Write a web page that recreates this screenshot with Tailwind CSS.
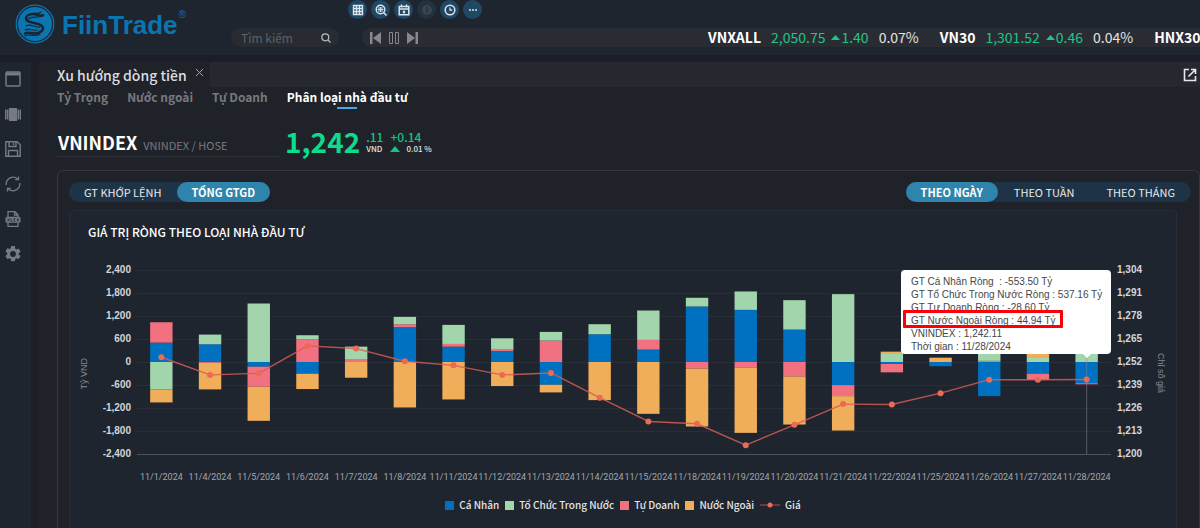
<!DOCTYPE html>
<html lang="vi">
<head>
<meta charset="utf-8">
<meta name="viewport" content="width=device-width, initial-scale=1">
<title>FiinTrade</title>
<script src="https://cdn.jsdelivr.net/npm/@tailwindcss/browser@4"></script>
</head>
<body class="h-screen overflow-hidden flex flex-col bg-[#1b1e27] text-white font-['Noto_Sans_CJK_SC','Noto_Sans',sans-serif]">

<header class="flex shrink-0 h-[55px] bg-[#1e252f]">
  <a href="#" class="flex shrink-0 w-[231px] pl-[15px] pt-1 text-[#0b75b0]" aria-label="FiinTrade">
    <svg class="size-10 shrink-0" viewBox="0 0 40 40" fill="none" stroke="currentColor">
      <circle cx="20" cy="20" r="18.8" stroke-width="1.2"/>
      <circle cx="20" cy="20" r="17" fill="currentColor" stroke="none"/>
      <g stroke="#1b2430" stroke-linecap="round" stroke-linejoin="round">
        <path stroke-width="2.4" d="M28 11c-3 2-6-1-10-1-4 0-7 2-7 4.500 0 3 4 3.500 8 4.500 6 1 9 2.500 9 5.500 0 3-5 5-9 5-4 0-6-2-9 0"/>
        <path stroke-width="1.100" d="M26 8c-3 3-7 0-10 2M13 15c4-3 8-1 15-3M15 18c4 2 11 1 14 6M11 22c4-3 9 2 14 1M10 26c4-2 8 1 12 0M10 32c4-3 9 2 15-2"/>
      </g>
    </svg>
    <span class="ml-[7px] mt-1 text-[26px] leading-[34px] font-bold font-['Liberation_Sans',Arial,sans-serif]">FiinTrade</span>
    <span class="ml-px mt-[6px] text-[10px] leading-[10px] font-['Liberation_Sans',Arial,sans-serif]">®</span>
  </a>
  <div class="flex-1 min-w-0 flex flex-col">
    <nav class="flex gap-1 h-5 pl-[117px] text-[#dce6ee]" aria-label="Công cụ">
      <button class="size-[19px] rounded-full bg-[#1f4865] grid place-items-center" aria-label="Bảng giá"><svg class="size-3" viewBox="0 0 12 12" fill="none" stroke="currentColor" stroke-width="1.400"><path d="M1.500 1.500h9v9h-9zM1.500 4.500h9M1.500 7.500h9M4.500 1.500v9M7.500 1.500v9"/></svg></button>
      <button class="size-[19px] rounded-full bg-[#1f4865] grid place-items-center" aria-label="Tra cứu"><svg class="size-3" viewBox="0 0 12 12" fill="none" stroke="currentColor" stroke-width="1.400"><circle cx="5.500" cy="5.500" r="4.300"/><path d="M8.500 8.500l3 3"/><path stroke-width=".9" d="M3 4h5M2.500 5.500h6M3 7h5M5.500 3v5"/></svg></button>
      <button class="size-[19px] rounded-full bg-[#1f4865] grid place-items-center" aria-label="Lịch"><svg class="size-3" viewBox="0 0 12 12" fill="none" stroke="currentColor" stroke-width="1.500"><path d="M1.200 2.500h9.600v8.300H1.200zM1 5h10M3.500.5v3M8.500.5v3M6 6.500v3M4.800 8h2.400"/></svg></button>
      <button class="size-[19px] rounded-full bg-[#213241] grid place-items-center text-[#3c444e]" aria-label="Thông tin"><svg class="size-3" viewBox="0 0 12 12"><circle cx="6" cy="6" r="5" fill="currentColor"/><path d="M6 3v6" stroke="#213241" stroke-width="1.500"/></svg></button>
      <button class="size-[19px] rounded-full bg-[#1f4865] grid place-items-center" aria-label="Lịch sử"><svg class="size-3" viewBox="0 0 12 12" fill="none" stroke="currentColor" stroke-width="1.500"><circle cx="6" cy="6" r="4.800"/><path stroke-width="1.200" d="M6 3.500v2.700h2.300"/></svg></button>
      <button class="size-[19px] rounded-full bg-[#1f4865] grid place-items-center" aria-label="Thêm"><svg class="size-3" viewBox="0 0 12 12" fill="currentColor"><circle cx="3" cy="6" r="1"/><circle cx="6" cy="6" r="1"/><circle cx="9" cy="6" r="1"/></svg></button>
    </nav>
    <div class="flex mt-2 h-[19px] gap-[23px]">
      <label class="flex items-center shrink-0 w-[108px] rounded-full bg-[#282b32] pl-[10px] pr-2">
        <input type="text" aria-label="Tìm kiếm" placeholder="Tìm kiếm" class="w-0 flex-1 bg-transparent text-[12px] leading-[19px] placeholder:text-[#5c6066] outline-none">
        <svg class="size-[10px] text-[#b9bdc2]" viewBox="0 0 10 10" fill="none" stroke="currentColor" stroke-width="1.200"><circle cx="4.300" cy="4.300" r="3.500"/><path d="M7 7l2.500 2.500"/></svg>
      </label>
      <div class="flex-1 min-w-0 flex items-center rounded-l-full bg-[#2a2c33] pl-2 overflow-hidden">
        <div class="flex items-center gap-[6px] w-[338px] shrink-0 text-[#85888d]">
          <button aria-label="Trước"><svg class="w-3 h-3 block" viewBox="0 0 12 12" fill="currentColor"><path d="M0 0h2.500v12H0zM11 0v12L3 6z"/></svg></button>
          <button aria-label="Tạm dừng"><svg class="w-3 h-3 block" viewBox="0 0 12 12" fill="none" stroke="currentColor"><path d="M1.500.5h3v11h-3zM7.500.5h3v11h-3z"/></svg></button>
          <button aria-label="Sau"><svg class="w-3 h-3 block" viewBox="0 0 12 12" fill="currentColor"><path d="M9.500 0H12v12H9.500zM1 0v12l8-6z"/></svg></button>
        </div>
        <div class="flex items-center gap-[21px] text-[14px] leading-[19px] whitespace-nowrap text-[#e3e4e6]">
          <div class="flex items-center gap-[10px] shrink-0"><b class="text-white">VNXALL</b><span class="text-[#1fc588]">2,050.75</span><span class="flex items-center gap-px -ml-1 text-[#1fc588]"><svg class="w-[9px] h-[5px]" viewBox="0 0 9 5" fill="currentColor"><path d="M0 5L4.500 0 9 5z"/></svg>1.40</span><span>0.07%</span></div>
          <div class="flex items-center gap-[10px] shrink-0"><b class="text-white">VN30</b><span class="text-[#1fc588]">1,301.52</span><span class="flex items-center gap-px -ml-1 text-[#1fc588]"><svg class="w-[9px] h-[5px]" viewBox="0 0 9 5" fill="currentColor"><path d="M0 5L4.500 0 9 5z"/></svg>0.46</span><span>0.04%</span></div>
          <b class="text-white shrink-0">HNX30</b>
        </div>
      </div>
    </div>
  </div>
</header>

<div class="flex-1 min-h-0 flex pt-[7px] gap-[7px]">
  <aside class="shrink-0 w-[31px] bg-[#1e252f] flex flex-col gap-[19px] pl-[5px] pt-[9px] text-[#777b81]">
    <button aria-label="Cửa sổ"><svg class="size-4 block" viewBox="0 0 16 16" fill="none" stroke="currentColor" stroke-width="1.500"><rect x="1" y="1" width="14" height="14" rx="1"/><path d="M1 3h14" stroke-width="3"/></svg></button>
    <button aria-label="Bố cục"><svg class="size-4 block" viewBox="0 0 16 16" fill="currentColor"><path d="M4 2h8v13H4zM0 3.500h1.300v10H0zM1.800 3.500h1.700v10H1.800zM12.500 3.500h1.700v10h-1.700zM14.700 3.500H16v10h-1.300z"/></svg></button>
    <button aria-label="Lưu"><svg class="size-4 block" viewBox="0 0 16 16" fill="none" stroke="currentColor" stroke-width="1.400"><path d="M.8.8h11.400l3 3v11.400H.8zM4 1v4.500h7V1M3.500 15v-5.500h9V15M8.500 2v2"/></svg></button>
    <button aria-label="Làm mới"><svg class="size-4 block" viewBox="0 0 16 16" fill="none" stroke="currentColor" stroke-width="1.300"><path d="M1.200 9A7 7 0 0 1 12.500 2.800M14.800 7A7 7 0 0 1 3.500 13.200M13.500.5v3.200h-3.200M2.500 15.500v-3.200h3.200"/></svg></button>
    <button aria-label="Xuất Excel"><svg class="size-4 block" viewBox="0 0 16 16" fill="none" stroke="currentColor" stroke-width="1.300"><path d="M3 6V.7h7l3 3V6M3 11.500v3.800h10v-3.800M9.500.7V4H13"/><rect x=".5" y="5.800" width="15" height="6" rx="1.500" fill="currentColor" stroke="none"/><path stroke="#1e252f" stroke-width=".8" d="M2.500 7.300l2 3M4.500 7.300l-2 3M6 7.300v3h1.500M10.500 7.500H9v2.700h1.500M11.800 7.300l2 3M13.800 7.300l-2 3"/></svg></button>
    <button aria-label="Cài đặt"><svg class="size-4 block" viewBox="2 2 20 20" fill="currentColor"><path d="M19.140 12.940c.04-.3.060-.61.060-.94s-.02-.64-.07-.94l2.030-1.580a.49.490 0 0 0 .12-.61l-1.920-3.320a.488.488 0 0 0-.59-.22l-2.390.96c-.5-.38-1.030-.7-1.620-.94l-.36-2.540A.484.484 0 0 0 13.920 2h-3.840c-.24 0-.43.170-.47.410l-.36 2.540c-.59.240-1.130.57-1.620.94l-2.390-.96a.48.480 0 0 0-.59.220L2.740 8.470a.47.470 0 0 0 .12.610l2.030 1.580c-.05.300-.09.630-.09.940s.02.640.07.940l-2.030 1.580a.49.490 0 0 0-.12.610l1.920 3.320c.12.220.37.290.59.220l2.390-.96c.5.380 1.030.7 1.620.94l.36 2.540c.05.240.24.410.48.410h3.840c.24 0 .44-.17.470-.41l.36-2.540c.59-.24 1.130-.56 1.620-.94l2.390.96c.22.080.47 0 .59-.22l1.920-3.320a.47.470 0 0 0-.12-.61zM12 15.600a3.600 3.600 0 1 1 0-7.200 3.600 3.600 0 0 1 0 7.200z"/></svg></button>
  </aside>

  <main class="flex-1 min-w-0 flex flex-col bg-[#202229]">
    <div class="flex shrink-0 h-[25px]">
      <div class="flex shrink-0 w-[172px] pl-[19px] gap-2 text-[#dcdde0]">
        <h1 class="text-[14px] leading-[26px] font-medium whitespace-nowrap">Xu hướng dòng tiền</h1>
        <button class="text-[#a0a3a8] pb-1" aria-label="Đóng"><svg class="size-[9px]" viewBox="0 0 9 9" stroke="currentColor"><path d="M1 1l7 7M8 1l-7 7"/></svg></button>
      </div>
      <div class="flex-1 bg-[#262830] flex items-center justify-end pr-[3px]">
        <button aria-label="Mở cửa sổ mới"><svg class="size-[14px] block" viewBox="0 0 14 14" fill="none" stroke="#e6e7e9" stroke-width="1.600"><path d="M6 1.500H1.500v11h11V8M8 1.500h4.500V6M12.500 1.500L5.500 8.500"/></svg></button>
      </div>
    </div>

    <nav class="flex shrink-0 h-6 pl-[19px] gap-[19px] text-[12px] leading-[20px] font-bold text-[#77797e] whitespace-nowrap">
      <a href="#">Tỷ Trọng</a>
      <a href="#">Nước ngoài</a>
      <a href="#">Tự Doanh</a>
      <a href="#" class="text-white flex flex-col items-center" aria-current="page">Phân loại nhà đầu tư<span class="w-5 h-[2px] bg-[#4aa8e0]"></span></a>
    </nav>

    <section class="flex shrink-0 h-9 mt-[13px] pl-[19px] gap-[5px] whitespace-nowrap">
      <div class="flex items-baseline gap-[6px] w-[223px] h-[33px] pl-px border-b border-[#303239]">
        <h2 class="text-[18px] leading-[36px] font-bold">VNINDEX</h2>
        <span class="text-[11px] text-[#777a7f]">VNINDEX / HOSE</span>
      </div>
      <div class="text-[28px] leading-[34px] font-bold text-[#0ddb8d]">1,242</div>
      <div class="pt-[6px] pl-px">
        <div class="text-[12px] leading-[14px] font-medium text-[#14c481]">.11</div>
        <div class="text-[8px] leading-[10px] font-medium text-[#e3e4e6]">VND</div>
      </div>
      <div class="pt-[6px] pl-[2px]">
        <div class="text-[12px] leading-[14px] font-medium text-[#14c481]">+0.14</div>
        <div class="flex items-center gap-[6px] text-[8px] leading-[10px] font-medium text-[#e3e4e6]"><svg class="w-[10px] h-[6px]" viewBox="0 0 10 6" fill="#14c481"><path d="M0 6L5 0l5 6z"/></svg>0.01 %</div>
      </div>
    </section>

    <section class="flex-1 min-h-0 mt-[10px] ml-[19px] flex flex-col rounded-t-md border border-b-0 border-[#35373e] pl-[11px] pr-[8px] pt-[11px]">
      <div class="flex justify-between shrink-0 text-[11px] leading-5 text-[#e8e9eb] whitespace-nowrap">
        <div class="flex rounded-full bg-[#1e3345]">
          <button class="px-[15px]">GT KHỚP LỆNH</button>
          <button class="px-[15px] rounded-full bg-[#2e84ab] font-bold text-white">TỔNG GTGD</button>
        </div>
        <div class="flex rounded-full bg-[#1e3345]">
          <button class="px-[15px] rounded-full bg-[#2e84ab] font-bold text-white">THEO NGÀY</button>
          <button class="px-4">THEO TUẦN</button>
          <button class="px-4">THEO THÁNG</button>
        </div>
      </div>

      <div class="flex-1 min-h-0 mt-2 mr-[14px] flex flex-col rounded-t border border-b-0 border-[#282c34] bg-[#1e252f]">
        <h3 class="shrink-0 pl-[18px] pt-[11px] text-[12px] leading-[20px] font-medium">GIÁ TRỊ RÒNG THEO LOẠI NHÀ ĐẦU TƯ</h3>
        <div class="flex shrink-0 mt-[22px] font-['Liberation_Sans',Arial,sans-serif] text-[10px] leading-3">
          <div class="flex items-center justify-center w-7 text-[#85888e]"><span class="[writing-mode:vertical-rl] rotate-180 text-[9px] whitespace-nowrap">Tỷ VND</span></div>
          <div class="flex flex-col justify-between w-[33px] h-[196px] text-right font-bold text-[#d4d6d9]">
            <span>2,400</span><span>1,800</span><span>1,200</span><span>600</span><span>0</span><span>-600</span><span>-1,200</span><span>-1,800</span><span>-2,400</span>
          </div>
          <div class="relative flex-1 min-w-0 mx-[6px] pt-[6px]">
            <svg id="plot" class="block w-full h-[185px] overflow-visible" role="img" aria-label="Giá trị ròng theo loại nhà đầu tư"></svg>
            <div id="dates" class="grid grid-cols-20 mt-4 text-[9px] leading-3 font-['Roboto',Arial,sans-serif] text-[#a3a6ab] whitespace-nowrap"></div>
            <div class="absolute right-0 top-[6px] w-[210px] h-[84px] rounded bg-white pl-[10px] pt-[5px] text-[10px] leading-[13px] text-[#44474b] whitespace-nowrap">
              <p>GT Cá Nhân Ròng&nbsp; : -553.50 Tỷ</p>
              <p>GT Tổ Chức Trong Nước Ròng : 537.16 Tỷ</p>
              <p>GT Tự Doanh Ròng : -28.60 Tỷ</p>
              <p>GT Nước Ngoài Ròng : 44.94 Tỷ</p>
              <p>VNINDEX : 1,242.11</p>
              <p>Thời gian : 11/28/2024</p>
              <div class="absolute left-[2px] top-[40px] w-[160px] h-[18px] rounded-[1px] border-[3px] border-[#fb0007]"></div>
              <svg class="absolute right-5 top-[84px] w-2 h-1" viewBox="0 0 8 4" fill="#fff"><path d="M0 0h8L4 4z"/></svg>
            </div>
          </div>
          <div class="flex flex-col justify-between w-[28px] h-[196px] font-bold text-[#d4d6d9]">
            <span>1,304</span><span>1,291</span><span>1,278</span><span>1,265</span><span>1,252</span><span>1,239</span><span>1,226</span><span>1,213</span><span>1,200</span>
          </div>
          <div class="flex items-center justify-center w-[31px] text-[#85888e]"><span class="[writing-mode:vertical-rl] text-[9px] whitespace-nowrap">Chỉ số giá</span></div>
        </div>
        <ul class="flex justify-center items-center shrink-0 mt-[14px] gap-[6px] text-[10px] leading-4 font-medium text-[#e3e4e6] whitespace-nowrap">
          <li class="flex items-center gap-[5px]"><i class="size-[9px] bg-[#0070c0]"></i>Cá Nhân</li>
          <li class="flex items-center gap-[5px]"><i class="size-[9px] bg-[#a2d5ab]"></i>Tổ Chức Trong Nước</li>
          <li class="flex items-center gap-[5px]"><i class="size-[9px] bg-[#f27180]"></i>Tự Doanh</li>
          <li class="flex items-center gap-[5px]"><i class="size-[9px] bg-[#f0ad5a]"></i>Nước Ngoài</li>
          <li class="flex items-center gap-[5px]"><svg class="w-5 h-[6px]" viewBox="0 0 20 6"><path d="M0 3h20" stroke="#b9504c"/><circle cx="10" cy="3" r="2.500" fill="#ee6a5f"/></svg>Giá</li>
        </ul>
      </div>
    </section>
  </main>
</div>

<script>
// Each row: date, individuals, proprietary, domestic institutions, foreign (billion VND), index close
const rows = [
  ['11/1/2024', 505, 532, -715, -340, 1254.7],
  ['11/4/2024', 462, -20, 253, -695, 1244.7],
  ['11/5/2024', -122, -523, 1526, -890, 1245.6],
  ['11/6/2024', -305, 593, 105, -401, 1261.1],
  ['11/7/2024', 0, 78, 323, -410, 1259.6],
  ['11/8/2024', 907, 78, 192, -1186, 1252.4],
  ['11/11/2024', 401, 70, 497, -977, 1250.1],
  ['11/12/2024', 288, 52, 279, -628, 1244.7],
  ['11/13/2024', -593, 558, 227, -200, 1245.8],
  ['11/14/2024', 724, 0, 262, -994, 1231.8],
  ['11/15/2024', 323, 253, 767, -1352, 1218.4],
  ['11/18/2024', 1448, -174, 227, -1508, 1217.1],
  ['11/19/2024', 1360, -140, 480, -1709, 1205.0],
  ['11/20/2024', 846, -375, 767, -1256, 1216.5],
  ['11/21/2024', -602, -288, 1770, -898, 1228.2],
  ['11/22/2024', -50, -220, 209, 61, 1228.0],
  ['11/25/2024', -110, 0, 0, 113, 1234.4],
  ['11/26/2024', -890, 30, 700, 0, 1242.0],
  ['11/27/2024', -305, -165, 105, 120, 1242.0],
  ['11/28/2024', -553.5, -28.6, 537.16, 44.94, 1242.11]
];
const colors = ['#0070c0', '#f27180', '#a2d5ab', '#f0ad5a'];
const H = 184, step = 100 / rows.length;
const yv = v => (2400 - v) / 4800 * H;
const yp = p => (1304 - p) / 104 * H;
let out = '';
for (let i = 0; i < 9; i++) {
  const y = i * 23 + 0.5;
  out += `<line x1="0" x2="100%" y1="${y}" y2="${y}" stroke="${i === 8 ? '#4d525b' : '#292e37'}"/>`;
}
rows.forEach((r, i) => {
  let up = 0, down = 0;
  colors.forEach((c, k) => {
    const v = r[k + 1];
    if (!v) return;
    const base = v > 0 ? up : down, end = base + v;
    out += `<rect x="${(i + 0.27) * step}%" width="${step * 0.46}%" y="${yv(Math.max(base, end))}" height="${Math.abs(v) / 4800 * H}" fill="${c}"/>`;
    if (v > 0) up = end; else down = end;
  });
});
out += `<line x1="97.5%" x2="97.5%" y1="88" y2="${H}" stroke="#8b909a" stroke-opacity=".5"/>`;
rows.slice(1).forEach((r, i) => {
  out += `<line x1="${(i + 0.5) * step}%" y1="${yp(rows[i][5])}" x2="${(i + 1.5) * step}%" y2="${yp(r[5])}" stroke="#d65c56" stroke-width="1.4" stroke-opacity=".85"/>`;
});
rows.forEach((r, i) => {
  out += `<circle cx="${(i + 0.5) * step}%" cy="${yp(r[5])}" r="3" fill="#ec6a55"/>`;
});
document.getElementById('plot').innerHTML = out;
document.getElementById('dates').innerHTML = rows.map(r => `<span class="flex justify-center min-w-0">${r[0]}</span>`).join('');
</script>
</body>
</html>
